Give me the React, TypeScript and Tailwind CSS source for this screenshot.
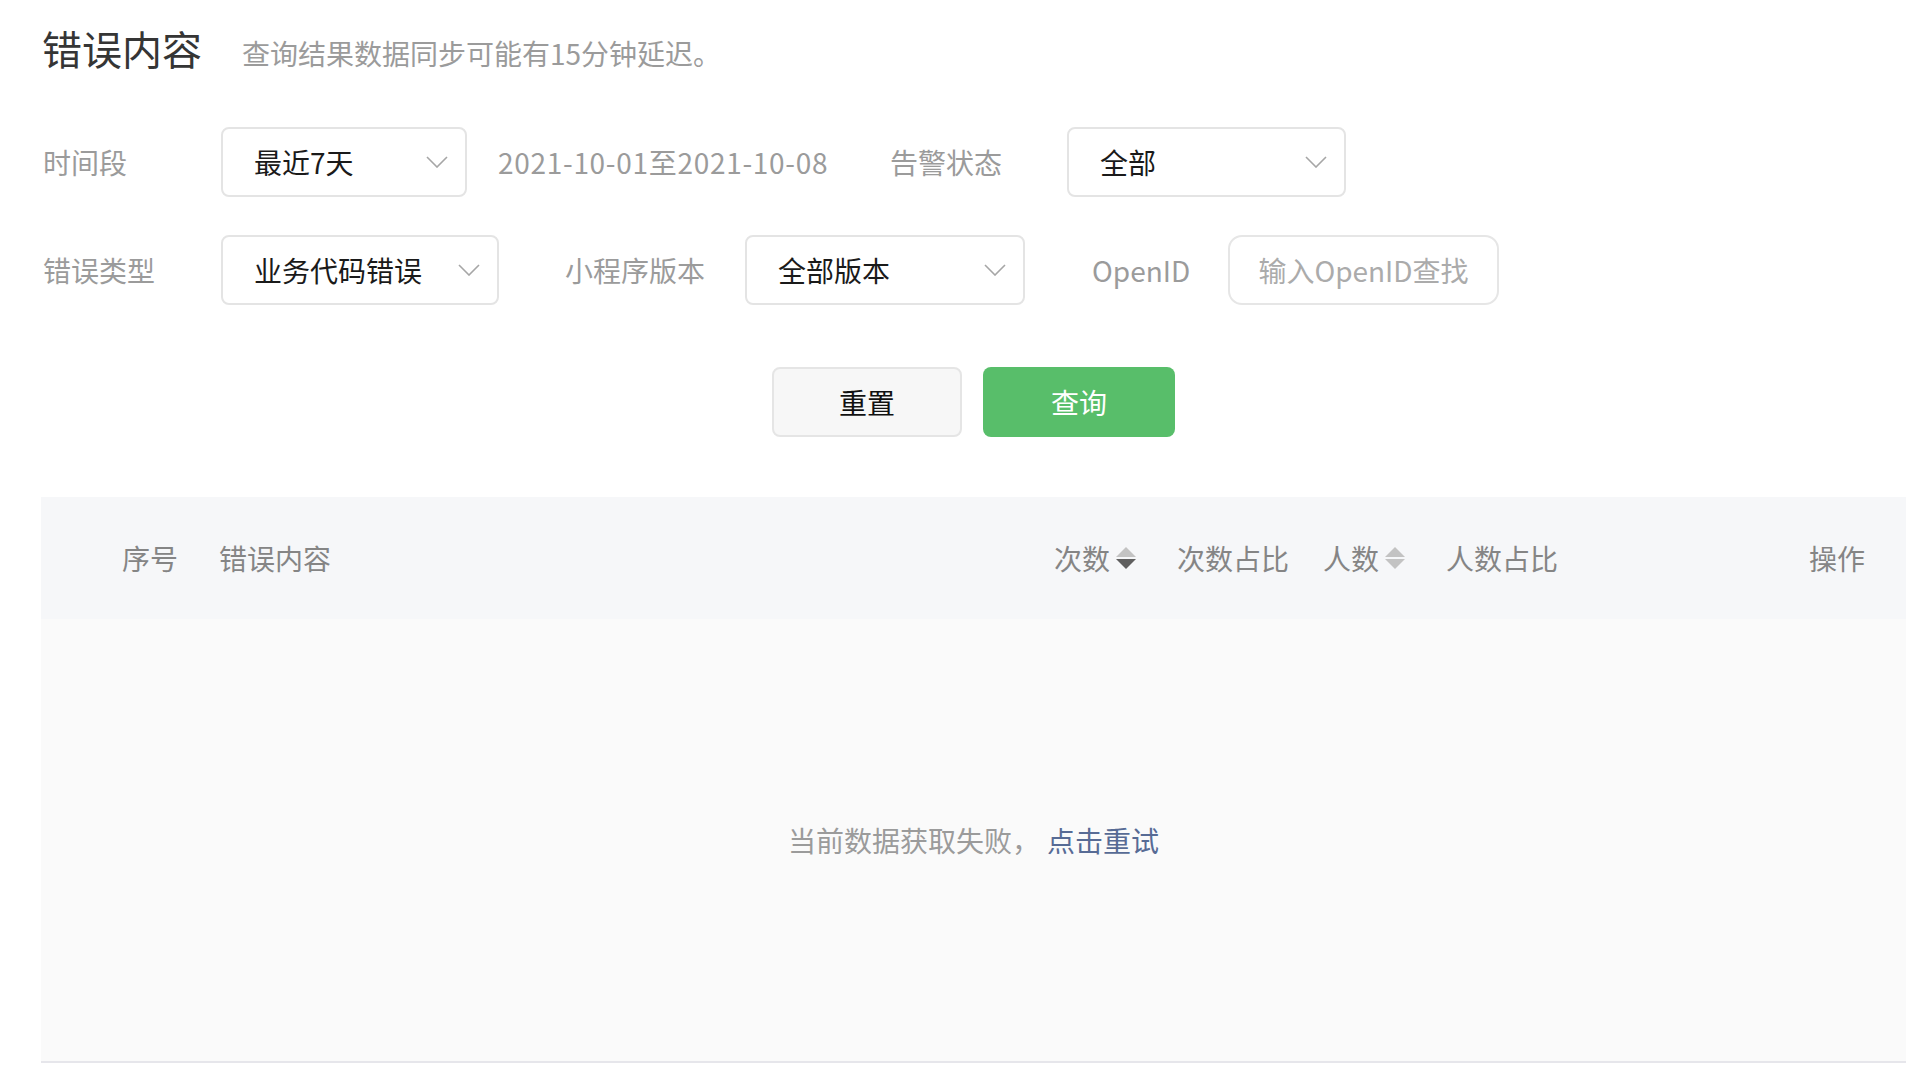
import React from "react";

function Chevron() {
  return (
    <svg width="22" height="12" viewBox="0 0 22 12" fill="none" className="shrink-0">
      <path d="M1 1 L11 11 L21 1" stroke="#a6a6a6" strokeWidth="1.6" />
    </svg>
  );
}

function Select({ value, width }: { value: string; width: string }) {
  return (
    <div
      className={`${width} h-[70px] shrink-0 border-2 border-[#e4e4e4] rounded-[8px] bg-white flex items-center justify-between pl-[31px] pr-[17px] text-[28px] text-[#1a1a1a]`}
    >
      <span>{value}</span>
      <Chevron />
    </div>
  );
}

function SortIcon({ active }: { active: boolean }) {
  return (
    <svg width="20" height="22" viewBox="0 0 20 22" className="ml-[6px] shrink-0">
      <polygon points="0,10 10,0 20,10" fill="#c3c3c3" />
      <polygon points="0,12 20,12 10,22" fill={active ? "#5f5f5f" : "#c3c3c3"} />
    </svg>
  );
}

export default function App() {
  return (
    <div className="w-[1910px] min-h-[1082px] bg-white font-['Noto_Sans_CJK_SC',sans-serif] pl-[41px] pr-[4px] pt-[22px]">
      {/* Title */}
      <div className="flex items-baseline pl-[1px]">
        <h1 className="text-[40px] leading-[52px] text-[#353535] font-normal">错误内容</h1>
        <span className="ml-[40px] text-[28px] text-[#9b9b9b]">查询结果数据同步可能有15分钟延迟。</span>
      </div>

      {/* Filters row 1 */}
      <div className="mt-[53px] flex items-center h-[70px] text-[28px]">
        <div className="w-[180px] shrink-0 pl-[2px] text-[#9b9b9b]">时间段</div>
        <Select value="最近7天" width="w-[246px]" />
        <div className="ml-[31px] w-[328px] shrink-0 text-[#9b9b9b] whitespace-nowrap tracking-[0.7px]">2021-10-01至2021-10-08</div>
        <div className="ml-[64px] w-[177px] shrink-0 text-[#9b9b9b]">告警状态</div>
        <Select value="全部" width="w-[279px]" />
      </div>

      {/* Filters row 2 */}
      <div className="mt-[38px] flex items-center h-[70px] text-[28px]">
        <div className="w-[180px] shrink-0 pl-[2px] text-[#9b9b9b]">错误类型</div>
        <Select value="业务代码错误" width="w-[278px]" />
        <div className="ml-[66px] w-[180px] shrink-0 text-[#9b9b9b]">小程序版本</div>
        <Select value="全部版本" width="w-[280px]" />
        <div className="ml-[67px] w-[136px] shrink-0 text-[#9b9b9b]">OpenID</div>
        <div className="w-[271px] h-[70px] shrink-0 border-2 border-[#e6e6e6] rounded-[14px] flex items-center justify-center text-[#ababab]">
          输入OpenID查找
        </div>
      </div>

      {/* Buttons */}
      <div className="mt-[62px] flex justify-center gap-[21px] text-[28px]">
        <button className="w-[190px] h-[70px] border-2 border-[#e5e5e5] bg-[#f7f7f7] rounded-[8px] text-[#111111] font-normal">
          重置
        </button>
        <button className="w-[192px] h-[70px] bg-[#58be6a] rounded-[8px] text-white">查询</button>
      </div>

      {/* Table */}
      <div className="mt-[60px]">
        <div className="h-[122px] bg-[#f6f7f9] flex items-center pl-[81px] pr-[41px] text-[28px] text-[#858585]">
          <div className="w-[97px] shrink-0">序号</div>
          <div className="w-[835px] shrink-0">错误内容</div>
          <div className="w-[123px] shrink-0 flex items-center">
            <span>次数</span>
            <SortIcon active={true} />
          </div>
          <div className="w-[146px] shrink-0">次数占比</div>
          <div className="w-[123px] shrink-0 flex items-center">
            <span>人数</span>
            <SortIcon active={false} />
          </div>
          <div className="flex-1">人数占比</div>
          <div>操作</div>
        </div>
        <div className="h-[444px] bg-[#fafafa] border-b-2 border-[#e6e6eb] flex items-center justify-center text-[28px]">
          <span className="text-[#9b9b9b]">当前数据获取失败，</span>
          <span className="ml-[7px] text-[#576b95]">点击重试</span>
        </div>
      </div>
    </div>
  );
}
